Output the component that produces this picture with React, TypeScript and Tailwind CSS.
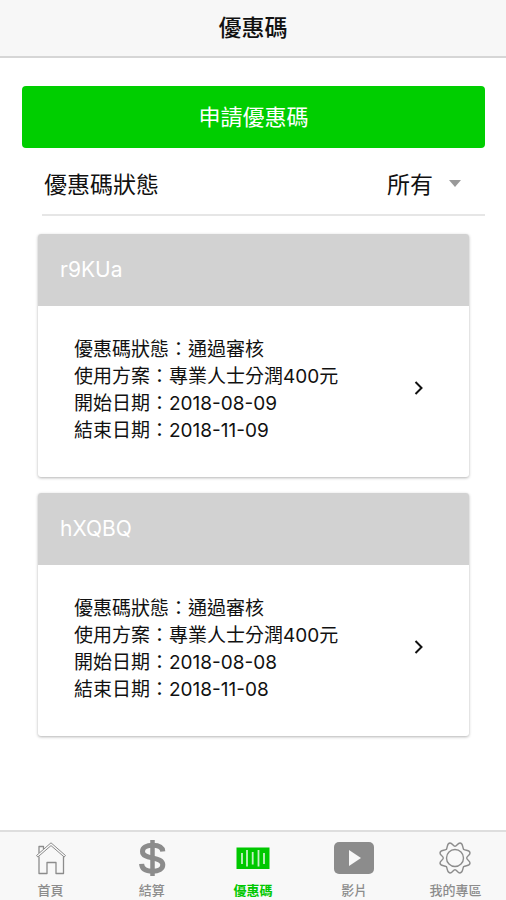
import { FC, ReactElement, ReactNode } from "react";

type Coupon = Readonly<{
  code: string;
  status: string;
  plan: string;
  start: string;
  end: string;
}>;

type Tab = Readonly<{
  label: string;
  href: string;
  icon: ReactNode;
  active?: boolean;
}>;

const coupons: Coupon[] = [
  { code: "r9KUa", status: "通過審核", plan: "專業人士分潤400元", start: "2018-08-09", end: "2018-11-09" },
  { code: "hXQBQ", status: "通過審核", plan: "專業人士分潤400元", start: "2018-08-08", end: "2018-11-08" },
];

const HomeIcon: FC = (): ReactElement => (
  <svg className="h-10 w-10" fill="none" stroke="currentColor" strokeLinejoin="round" viewBox="0 0 40 40">
    <path d="M5.5 17.500 20 4.800l14.500 12.700-1.300 1.500L20 7.600 6.800 19z" strokeWidth="1" />
    <path d="M8 18.500V35.500h8V24.500h9v11h7.500V18.500" strokeWidth="1.300" />
    <path d="M8 15V8.500h4.500v2.500" strokeWidth="1.300" />
  </svg>
);

const DollarIcon: FC = (): ReactElement => (
  <svg className="h-10 w-10" fill="none" stroke="currentColor" viewBox="0 0 40 40">
    <path d="M20.500 2v36" strokeWidth="4.500" />
    <path d="M30.800 13.500C30.500 9.300 26.300 7.300 20.600 7.300c-6 0-10.100 2.300-10.100 6.100 0 4.300 4.700 5.400 9.800 6.500 5.700 1.200 10.500 2.500 10.500 6.900 0 4.200-4.300 6.400-10.200 6.400-6.300 0-10.700-2.300-11-7.300" strokeWidth="5" />
  </svg>
);

const CouponIcon: FC = (): ReactElement => (
  <svg className="h-10 w-10" viewBox="0 0 40 40">
    <path d="M3.500 9.500h33v21.500h-33z" fill="currentColor" />
    <path d="M9 15v11M14 12v16.500M19.700 14v12.500M25.500 12v16.500M31 15v11" stroke="#c4f1c4" strokeWidth="1.800" />
  </svg>
);

const VideoIcon: FC = (): ReactElement => (
  <svg className="h-10 w-10" viewBox="0 0 40 40">
    <rect fill="currentColor" height="32" rx="5" width="40" y="4" />
    <path d="M15 12v16l12-8z" fill="#f8f8f8" />
  </svg>
);

// one quarter of the gear outline: two teeth, turned four times
const GEAR_QUARTER = "M20 8.300C22 8.300 22.500 5 25 5 28 5 27.300 8.500 28.600 11.400 31.500 12.700 35 12 35 15 35 17.500 31.700 18 31.700 20";

const GearIcon: FC = (): ReactElement => (
  <svg className="h-10 w-10" fill="none" stroke="currentColor" strokeWidth="1.400" viewBox="0 0 40 40">
    <circle cx="20" cy="20" r="8.500" />
    {[0, 90, 180, 270].map((angle) => (
      <path d={GEAR_QUARTER} key={angle} transform={`rotate(${angle} 20 20)`} />
    ))}
  </svg>
);

const tabs: Tab[] = [
  { label: "首頁", href: "#home", icon: <HomeIcon /> },
  { label: "結算", href: "#settlement", icon: <DollarIcon /> },
  { label: "優惠碼", href: "#coupons", icon: <CouponIcon />, active: true },
  { label: "影片", href: "#videos", icon: <VideoIcon /> },
  { label: "我的專區", href: "#account", icon: <GearIcon /> },
];

const CouponCard: FC<Coupon> = (props): ReactElement => (
  <article className="overflow-hidden rounded-[3px] bg-white shadow-[0_1px_3px_rgba(0,0,0,0.3)]">
    <h2 className="bg-[#d2d2d2] px-[22px] py-5 text-[21px] leading-8 text-white">{props.code}</h2>

    <a className="flex items-start justify-between pt-[30px] pr-11 pb-[33px] pl-9 text-[19px] leading-[27px]" href={`#${props.code}`}>
      <div>
        <p>優惠碼狀態：{props.status}</p>
        <p>使用方案：{props.plan}</p>
        <p>開始日期：{props.start}</p>
        <p>結束日期：{props.end}</p>
      </div>

      <svg aria-hidden="true" className="mt-11 h-4 w-3" fill="none" stroke="currentColor" strokeWidth="2" viewBox="0 0 12 16">
        <path d="m2.500 2 6 6-6 6" />
      </svg>
    </a>
  </article>
);

const App: FC = (): ReactElement => (
  <div className="flex min-h-screen flex-col bg-white font-['Inter','Noto_Sans_CJK_TC',sans-serif] text-[#111]" lang="zh-Hant">
    <header className="border-b-2 border-[#d6d6d6] bg-[#f7f7f7] py-3 text-center">
      <h1 className="text-[23px] leading-8 font-medium">優惠碼</h1>
    </header>

    <main className="flex-1 pt-7 pr-[21px] pb-6 pl-[22px]">
      <button className="h-[62px] w-full rounded bg-[#00ce00] text-[22px] text-white" type="button">
        申請優惠碼
      </button>

      <div className="ml-5 flex h-[68px] items-center justify-between border-b-2 border-[#e6e6e6] pt-2 pl-0.5 text-[23px]">
        <label htmlFor="status">優惠碼狀態</label>
        <div className="relative">
          <select className="appearance-none bg-transparent pr-[52px] leading-8" defaultValue="all" id="status">
            <option value="all">所有</option>
          </select>
          <svg aria-hidden="true" className="pointer-events-none absolute top-3 right-6 h-2 w-3" fill="#999" viewBox="0 0 12 8">
            <path d="M0 0h12L6 7z" />
          </svg>
        </div>
      </div>

      <section className="mt-[18px] mr-4 ml-4 space-y-4">
        {coupons.map((coupon) => (
          <CouponCard key={coupon.code} {...coupon} />
        ))}
      </section>
    </main>

    <nav className="sticky bottom-0 grid grid-cols-5 border-t-2 border-[#dedede] bg-[#f8f8f8] pt-1.5">
      {tabs.map((tab) => (
        <a
          aria-current={tab.active ? "page" : undefined}
          className={`flex flex-col items-center gap-0.5 text-[13px] leading-5 ${tab.active ? "font-bold text-[#00c800]" : "font-medium text-[#8c8c8c]"}`}
          href={tab.href}
          key={tab.label}
        >
          {tab.icon}
          <span>{tab.label}</span>
        </a>
      ))}
    </nav>
  </div>
);

export default App;
